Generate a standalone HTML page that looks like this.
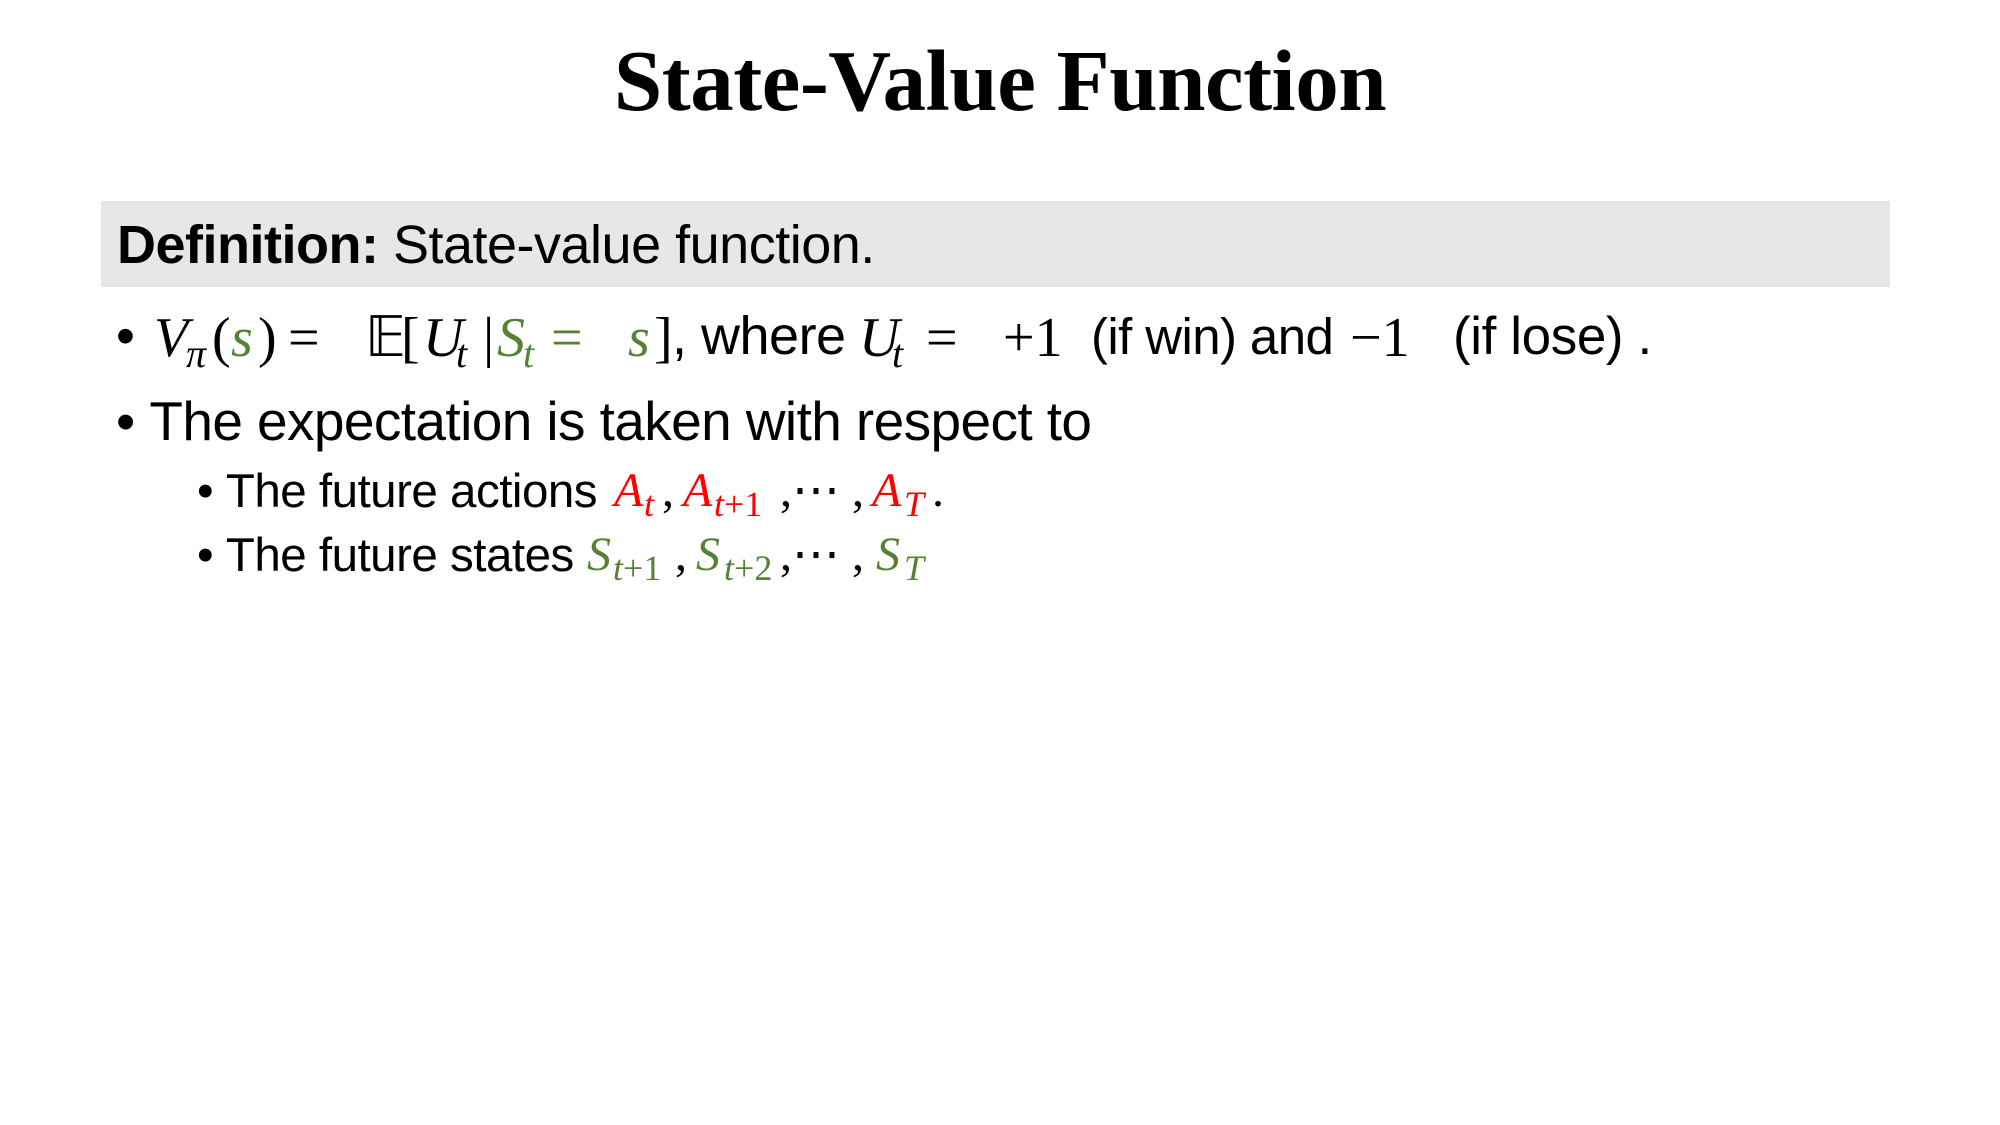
<!DOCTYPE html>
<html><head><meta charset="utf-8"><style>
body{margin:0;width:2000px;height:1125px;background:#fff;position:relative;overflow:hidden;font-family:"Liberation Sans",sans-serif;color:#000}
.l{position:absolute;white-space:nowrap;line-height:1}
.p{position:absolute;white-space:nowrap;line-height:1}
.m{font-family:"Liberation Serif",serif;font-style:italic}
.r{font-family:"Liberation Serif",serif}
.g{color:#548235}.red{color:#f00}
.L1 .p{top:310px;font-size:56px}
.L1 .s{font-size:40px;top:334px}
.L3 .p{top:467px;font-size:48px}
.L3 .s{font-size:36px;top:486px}
.L4 .p{top:531px;font-size:48px}
.L4 .s{font-size:36px;top:550px}
</style></head><body>
<div class="l" style="left:0;width:2000px;text-align:center;top:37px;font-family:'Liberation Serif',serif;font-weight:bold;font-size:87px;letter-spacing:-0.5px">State-Value Function</div>
<div style="position:absolute;left:101px;top:201px;width:1789px;height:86px;background:#e7e7e7"></div>
<div class="l" style="left:117px;top:218px;font-size:54px;letter-spacing:-0.5px"><b>Definition:</b> State-value function.</div>

<div class="L1">
<div class="p" style="left:116px;font-size:54px;top:309px">•</div>
<div class="p m" style="left:154px">V</div>
<div class="p m s" style="left:186px">π</div>
<div class="p r" style="left:212px">(</div>
<div class="p m g" style="left:231px">s</div>
<div class="p r" style="left:258px">)</div>
<div class="p r" style="left:288px">=</div>
<div class="p r" style="left:365px">𝔼</div>
<div class="p r" style="left:401px">[</div>
<div class="p m" style="left:423px">U</div>
<div class="p m s" style="left:456px">t</div>
<div class="p r" style="left:483px">|</div>
<div class="p m g" style="left:497px">S</div>
<div class="p m g s" style="left:523px">t</div>
<div class="p r g" style="left:551px">=</div>
<div class="p m g" style="left:628px">s</div>
<div class="p r" style="left:654px">]</div>
<div class="p" style="left:672px;font-size:54px;top:309px;letter-spacing:-0.5px">, where</div>
<div class="p m" style="left:859px">U</div>
<div class="p m s" style="left:892px">t</div>
<div class="p r" style="left:926px">=</div>
<div class="p r" style="left:1003px">+1</div>
<div class="p" style="left:1091px;font-size:51px;top:311px;letter-spacing:-0.6px">(if win) and</div>
<div class="p r" style="left:1350px">−1</div>
<div class="p" style="left:1453px;font-size:53px;top:310px;letter-spacing:-0.4px">(if lose) .</div>
</div>

<div class="l" style="left:116px;top:394px;font-size:55px;letter-spacing:-0.6px">•&nbsp;The expectation is taken with respect to</div>

<div class="L3">
<div class="p" style="left:197px;top:468px;font-size:47.5px;letter-spacing:-0.5px">•&nbsp;The future actions</div>
<div class="p m red" style="left:614px">A</div>
<div class="p m red s" style="left:644px">t</div>
<div class="p r" style="left:662px">,</div>
<div class="p m red" style="left:683px">A</div>
<div class="p red s" style="left:714px"><span class="m">t</span><span class="r">+1</span></div>
<div class="p r" style="left:780px">,⋯ ,</div>
<div class="p m red" style="left:872px">A</div>
<div class="p m red s" style="left:904px">T</div>
<div class="p r" style="left:932px">.</div>
</div>

<div class="L4">
<div class="p" style="left:197px;top:532px;font-size:47.5px;letter-spacing:-0.5px">•&nbsp;The future states</div>
<div class="p m g" style="left:587px">S</div>
<div class="p g s" style="left:613px"><span class="m">t</span><span class="r">+1</span></div>
<div class="p r" style="left:675px">,</div>
<div class="p m g" style="left:696px">S</div>
<div class="p g s" style="left:724px"><span class="m">t</span><span class="r">+2</span></div>
<div class="p r" style="left:780px">,⋯ ,</div>
<div class="p m g" style="left:876px">S</div>
<div class="p m g s" style="left:904px">T</div>
</div>
</body></html>
